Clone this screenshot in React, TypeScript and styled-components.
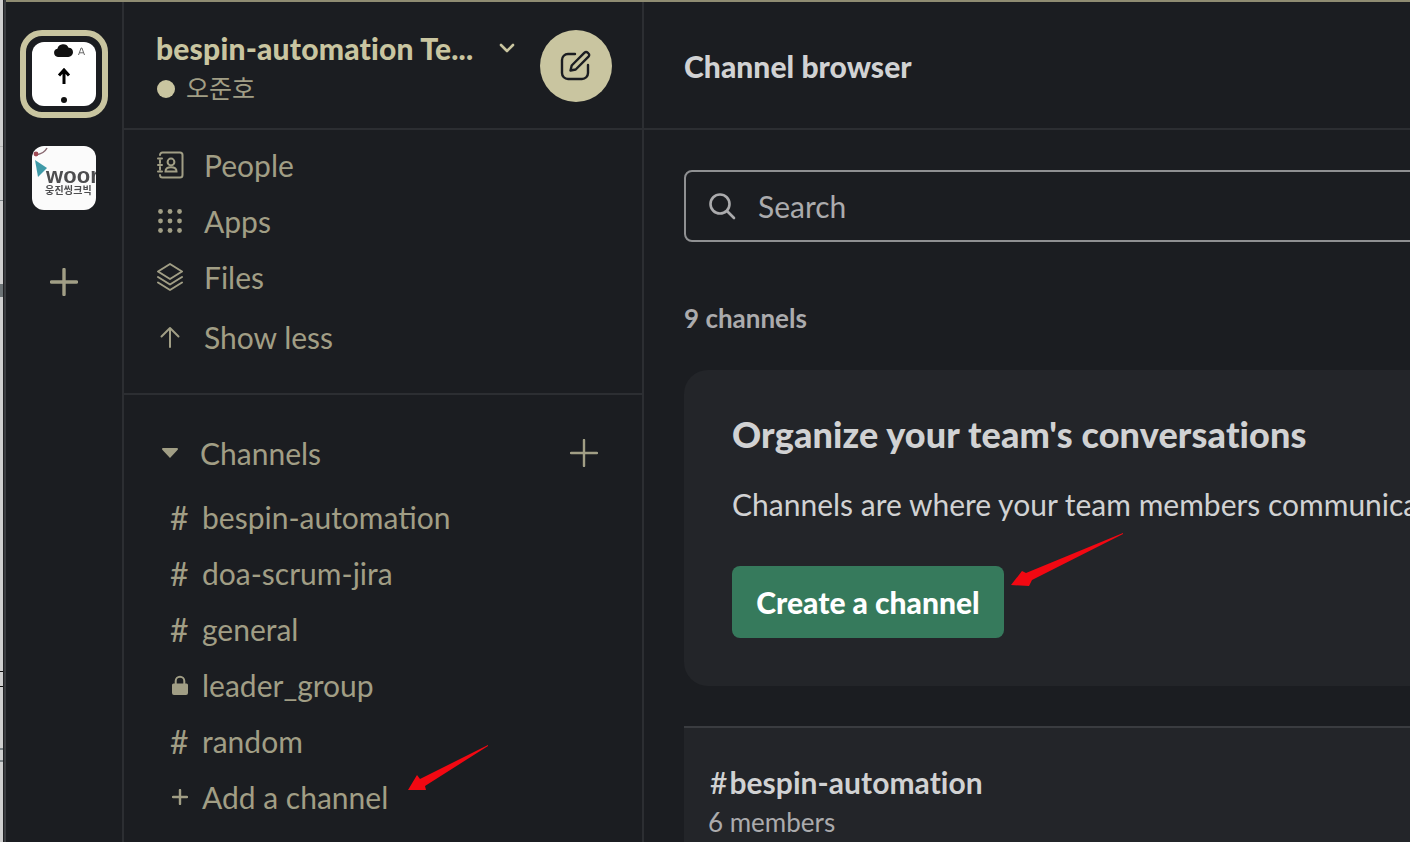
import React from "react";
import styled, { createGlobalStyle } from "styled-components";

const Global = createGlobalStyle`
  html, body { margin: 0; padding: 0; background: #1b1d21; overflow: hidden; }
  * { box-sizing: border-box; }
`;

const Page = styled.div`
  position: relative; width: 1410px; height: 842px; overflow: hidden;
  display: flex; background: #1b1d21;
  font-family: Lato, "Noto Sans CJK KR", sans-serif;
`;
const LeftEdge = styled.div`
  flex: none; width: 6px; border-right: 2px solid #3a3c40; box-shadow: inset -1px 0 0 #1f2023;
  background:
    linear-gradient(#b5b5b5, #b5b5b5) 0 146px / 4px 1px no-repeat,
    linear-gradient(#7d8588, #7d8588) 0 200px / 3px 1px no-repeat,
    linear-gradient(#6c7376, #6c7376) 0 284px / 3px 13px no-repeat,
    linear-gradient(#111, #111) 0 671px / 4px 1px no-repeat,
    linear-gradient(#111, #111) 0 686px / 4px 1px no-repeat,
    linear-gradient(#7d8588, #7d8588) 0 748px / 3px 2px no-repeat,
    linear-gradient(#7d8588, #7d8588) 0 760px / 3px 2px no-repeat,
    #cfcfcf;
`;
const Frame = styled.div`flex: 1; min-width: 0; display: flex; flex-direction: column;`;
const TopEdge = styled.div`height: 2px; background: #8f8c72; flex: none;`;
const Body = styled.div`flex: 1; display: flex; min-height: 0;`;
const Rail = styled.nav`
  flex: none; width: 118px; border-right: 2px solid #2c2e32;
  display: flex; flex-direction: column; align-items: center;
  padding: 28px 0 0 0;
`;
const ActiveRing = styled.div`
  width: 88px; height: 88px; border: 6px solid #c9c5a0; border-radius: 22px;
  display: flex; align-items: center; justify-content: center;
`;
const AvatarTile = styled.div`
  width: 64px; height: 64px; border-radius: 12px; background: #fff;
  position: relative; overflow: hidden; flex: none;
`;
const WoorTile = styled(AvatarTile)`
  margin-top: 28px; background: #fbfbfb; color: #4d4d4f;
  display: flex; flex-direction: column; padding: 22px 0 0 14px; filter: blur(.5px);
`;
const WoorWord = styled.span`
  font: 700 22px/16px "Liberation Sans", sans-serif; letter-spacing: .1px; white-space: nowrap;
`;
const WoorKorean = styled.span`
  font: 700 10px/12px "Noto Sans CJK KR", sans-serif; white-space: nowrap; letter-spacing: .2px; margin-left: -1px;
`;
const Swoosh = styled.svg`position: absolute; left: 0; top: 0;`;
const RailPlus = styled.svg`margin-top: 58px; color: #a19e85;`;

const Sidebar = styled.aside`
  flex: none; width: 520px; border-right: 2px solid #2c2e32;
  display: flex; flex-direction: column;
`;
const WorkspaceHeader = styled.header`
  height: 128px; flex: none; border-bottom: 2px solid #2c2e32;
  padding: 26px 30px 0 32px; display: flex; justify-content: space-between;
`;
const ComposeSlot = styled.div`padding-top: 2px; flex: none;`;
const WorkspaceInfo = styled.div`display: flex; flex-direction: column; padding-top: 2px;`;
const WorkspaceNameRow = styled.div`display: flex; align-items: flex-start; gap: 26px;`;
const WorkspaceName = styled.span`
  font-size: 30px; line-height: 36px; font-weight: 900; color: #c9c5a0; white-space: nowrap; letter-spacing: .2px;
`;
const Chevron = styled.svg`margin-top: 12px; color: #c9c5a0;`;
const UserRow = styled.div`display: flex; align-items: center; gap: 11px; margin-top: 6px;`;
const StatusDot = styled.span`width: 18px; height: 18px; border-radius: 50%; background: #c9c5a0; display: block; margin: 3px 0 0 1px;`;
const UserName = styled.span`
  font: 400 25px/30px "Noto Sans CJK KR", sans-serif; color: #a19e85;
`;
const ComposeButton = styled.button`
  width: 72px; height: 72px; border: 0; border-radius: 50%; background: #c9c5a0; padding: 0; margin: 0;
  display: flex; align-items: center; justify-content: center; color: #1b1d21; flex: none;
`;
const NavSection = styled.section`
  height: 265px; flex: none; border-bottom: 2px solid #2c2e32; padding: 7px 32px 0;
`;
const NavRow = styled.div<{ $gap?: number }>`
  height: 56px; display: flex; align-items: center; gap: 19px; color: #a19e85;
  font-size: 30px; margin-top: ${(p) => p.$gap ?? 0}px;
  svg { flex: none; margin-left: 1px; }
`;
const ChannelSection = styled.section`padding: 30px 0 0 38px; flex: 1;`;
const ChannelHeader = styled.div`
  height: 56px; display: flex; align-items: center; color: #a19e85; font-size: 30px; padding-right: 44px;
`;
const Caret = styled.svg`flex: none; margin-right: 22px;`;
const HeaderPlus = styled.svg`margin-left: auto;`;
const ChannelList = styled.div`margin-top: 8px;`;
const ChannelRow = styled.div`
  height: 56px; display: flex; align-items: center; color: #a19e85; font-size: 30px; padding-left: 8px;
`;
const ChannelGlyph = styled.span<{ $icon?: boolean }>`
  width: 32px; flex: none; display: flex; align-items: center; font-size: 32px;
  padding-left: ${(p) => (p.$icon ? 2 : 0)}px;
`;
const Main = styled.main`flex: 1; min-width: 0; display: flex; flex-direction: column;`;
const MainHeader = styled.header`
  height: 128px; flex: none; border-bottom: 2px solid #2c2e32; padding: 2px 0 0 40px;
  display: flex; align-items: center; font-size: 30px; font-weight: 900; color: #d1d2d3; letter-spacing: .05px;
`;
const MainBody = styled.div`padding: 40px 0 0 40px; width: 1200px;`;
const SearchBox = styled.div`
  height: 72px; border: 2px solid #8f9092; border-radius: 8px; display: flex; align-items: center;
  padding-left: 22px; gap: 22px; color: #ababad; font-size: 30px;
`;
const CountLabel = styled.div`
  margin-top: 58px; height: 36px; line-height: 36px; font-size: 26px; font-weight: 700; color: #ababad;
`;
const PromoCard = styled.section`
  margin-top: 34px; height: 316px; background: #232529; border-radius: 24px; padding: 42px 48px 0;
`;
const PromoTitle = styled.h2`
  margin: 0; font-size: 36px; line-height: 44px; font-weight: 900; color: #d1d2d3; white-space: nowrap; letter-spacing: .13px;
`;
const PromoText = styled.p`
  margin: 30px 0 0; font-size: 30px; line-height: 36px; color: #d1d2d3; white-space: nowrap;
`;
const CreateButton = styled.button`
  margin-top: 44px; width: 272px; height: 72px; border: 0; border-radius: 8px; background: #367a5c;
  color: #fff; font: 900 30px Lato, sans-serif; padding: 0; display: block;
`;
const ChannelCard = styled.article`
  margin-top: 40px; height: 200px; border-top: 2px solid #3a3c40; background: #232529; padding: 35px 26px 0;
`;
const ChannelCardTitle = styled.div`
  font-size: 30px; line-height: 38px; font-weight: 700; color: #d1d2d3; white-space: nowrap; letter-spacing: .05px;
`;
const ChannelCardHash = styled.span`font-weight: 500; margin-right: 2px;`;
const ChannelCardMeta = styled.div`font-size: 26px; line-height: 32px; color: #ababad; margin: 5px 0 0 -2px;`;
const Arrow = styled.svg`position: absolute; overflow: visible;`;

const RedArrow = ({ left, top, w, h, points }: { left: number; top: number; w: number; h: number; points: string }) => (
  <Arrow style={{ left, top }} width={w} height={h} viewBox={`0 0 ${w} ${h}`}>
    <polygon points={points} fill="#f20812" />
  </Arrow>
);

const channels = [
  { glyph: "#", name: "bespin-automation" },
  { glyph: "#", name: "doa-scrum-jira" },
  { glyph: "#", name: "general" },
  { glyph: "lock", name: "leader_group" },
  { glyph: "#", name: "random" },
  { glyph: "+", name: "Add a channel" },
];

const LockIcon = () => (
  <svg width="16" height="20" viewBox="0 0 16 20" fill="#a19e85">
    <path d="M1.5 8.5h13A1.5 1.5 0 0 1 16 10v8a2 2 0 0 1-2 2H2a2 2 0 0 1-2-2v-8a1.5 1.5 0 0 1 1.5-1.5Z" />
    <path d="M3.7 9V6a4.3 4.3 0 0 1 8.6 0v3" fill="none" stroke="#a19e85" strokeWidth="2" />
  </svg>
);
const SmallPlus = () => (
  <svg width="16" height="16" viewBox="0 0 16 16" stroke="#a19e85" strokeWidth="2.4" strokeLinecap="round">
    <path d="M8 1v14M1 8h14" />
  </svg>
);

export default function App() {
  return (
    <Page>
      <Global />
      <LeftEdge />
      <Frame>
        <TopEdge />
        <Body>
          <Rail>
            <ActiveRing>
              <AvatarTile>
                <svg width="64" height="64" viewBox="0 0 64 64">
                  <path d="M26 15a4.2 4.2 0 0 1-.6-8.3 6 6 0 0 1 11.2-1 4.6 4.6 0 0 1 4.4 4.6 4.7 4.7 0 0 1-4.7 4.7Z" fill="#111" />
                  <path d="M46.5 13l2.6-7h.8l2.6 7M47.6 10.8h3.8" fill="none" stroke="#666" strokeWidth="1" />
                  <path d="M32 42V29M27 33.5L32 28l5 5.5" fill="none" stroke="#000" strokeWidth="3" />
                  <circle cx="32" cy="58" r="3" fill="#111" />
                </svg>
              </AvatarTile>
            </ActiveRing>
            <WoorTile>
              <Swoosh width="24" height="34" viewBox="0 0 24 34">
                <path d="M15 2C13 6 9 8 4 9" fill="none" stroke="#8a6a72" strokeWidth="1.5" />
                <path d="M3 14l12 8-9 9Z" fill="#3f9aa8" />
                <circle cx="4" cy="8" r="2.4" fill="#a04a55" />
              </Swoosh>
              <WoorWord>woor</WoorWord>
              <WoorKorean>웅진씽크빅</WoorKorean>
            </WoorTile>
            <RailPlus width="28" height="28" viewBox="0 0 28 28" fill="none" stroke="currentColor" strokeWidth="3.4" strokeLinecap="round">
              <path d="M14 1.5v25M1.5 14h25" />
            </RailPlus>
          </Rail>
          <Sidebar>
            <WorkspaceHeader>
              <WorkspaceInfo>
                <WorkspaceNameRow>
                  <WorkspaceName>bespin-automation Te...</WorkspaceName>
                  <Chevron width="16" height="12" viewBox="0 0 16 12" fill="none" stroke="currentColor" strokeWidth="2.6" strokeLinecap="round" strokeLinejoin="round">
                    <path d="M2 3l6 6 6-6" />
                  </Chevron>
                </WorkspaceNameRow>
                <UserRow>
                  <StatusDot />
                  <UserName>오준호</UserName>
                </UserRow>
              </WorkspaceInfo>
              <ComposeSlot>
                <ComposeButton aria-label="New message">
                  <svg width="32" height="32" viewBox="0 0 32 32" fill="none" stroke="currentColor" strokeWidth="2.4" strokeLinecap="round" strokeLinejoin="round">
                    <path d="M15 4H8a6 6 0 0 0-6 6v13a6 6 0 0 0 6 6h14a6 6 0 0 0 6-6v-8" />
                    <path d="M10.5 20.5l1.2-5L24.5 2.7a2.2 2.2 0 0 1 3.2 0l.8.8a2.2 2.2 0 0 1 0 3.2L15.7 19.5Z" />
                  </svg>
                </ComposeButton>
              </ComposeSlot>
            </WorkspaceHeader>
            <NavSection>
              <NavRow>
                <svg width="28" height="28" viewBox="0 0 28 28" fill="none" stroke="#a19e85" strokeWidth="2" strokeLinecap="round">
                  <path d="M3 4a2.5 2.5 0 0 1 2.500-2.500H23A2.500 2.500 0 0 1 25.500 4v20a2.500 2.500 0 0 1-2.500 2.500H5.500A2.500 2.500 0 0 1 3 24" />
                  <path d="M1 7.500h4M1 14h4M1 20.500h4M3 9.500v2.500M3 16v2.500" />
                  <circle cx="14" cy="11" r="3.400" />
                  <path d="M8.500 20.500c0-3.300 2.300-4.300 5.500-4.300s5.500 1 5.500 4.300Z" />
                </svg>
                People
              </NavRow>
              <NavRow>
                <svg width="28" height="28" viewBox="0 0 28 28" fill="#a19e85">
                  {[4.5, 14, 23.5].flatMap((y) => [3.5, 13, 22.5].map((x) => <circle key={`${x}-${y}`} cx={x} cy={y} r="2.4" />))}
                </svg>
                Apps
              </NavRow>
              <NavRow>
                <svg width="28" height="30" viewBox="0 0 28 30" fill="none" stroke="#a19e85" strokeWidth="2" strokeLinejoin="round" strokeLinecap="round">
                  <path d="M13 2l12 7.5L13 17 1 9.5Z" />
                  <path d="M1 15l12 7.5L25 15" />
                  <path d="M1 20.5L13 28l12-7.5" />
                </svg>
                Files
              </NavRow>
              <NavRow $gap={4}>
                <svg width="28" height="28" viewBox="0 0 28 28" fill="none" stroke="#a19e85" strokeWidth="2" strokeLinecap="round" strokeLinejoin="round">
                  <path d="M13 24V5M4.500 13.500L13 5l8.500 8.500" />
                </svg>
                Show less
              </NavRow>
            </NavSection>
            <ChannelSection>
              <ChannelHeader>
                <Caret width="16" height="10" viewBox="0 0 16 10" fill="#a19e85">
                  <path d="M1 0h14a1 1 0 0 1 .7 1.7L8 10 .3 1.7A1 1 0 0 1 1 0Z" />
                </Caret>
                Channels
                <HeaderPlus width="28" height="28" viewBox="0 0 28 28" fill="none" stroke="#a19e85" strokeWidth="2.4" strokeLinecap="round">
                  <path d="M14 1v26M1 14h26" />
                </HeaderPlus>
              </ChannelHeader>
              <ChannelList>
                {channels.map((c) => (
                  <ChannelRow key={c.name}>
                    <ChannelGlyph $icon={c.glyph !== "#"}>
                      {c.glyph === "lock" ? <LockIcon /> : c.glyph === "+" ? <SmallPlus /> : c.glyph}
                    </ChannelGlyph>
                    {c.name}
                  </ChannelRow>
                ))}
              </ChannelList>
            </ChannelSection>
          </Sidebar>
          <Main>
            <MainHeader>Channel browser</MainHeader>
            <MainBody>
              <SearchBox>
                <svg width="28" height="28" viewBox="0 0 28 28" fill="none" stroke="#ababad" strokeWidth="2.6" strokeLinecap="round">
                  <circle cx="12" cy="12" r="9.5" />
                  <path d="M19 19l7 7" />
                </svg>
                Search
              </SearchBox>
              <CountLabel>9 channels</CountLabel>
              <PromoCard>
                <PromoTitle>Organize your team's conversations</PromoTitle>
                <PromoText>Channels are where your team members communicate. They're best when organized around a topic.</PromoText>
                <CreateButton>Create a channel</CreateButton>
              </PromoCard>
              <ChannelCard>
                <ChannelCardTitle><ChannelCardHash>#</ChannelCardHash>bespin-automation</ChannelCardTitle>
                <ChannelCardMeta>6 members</ChannelCardMeta>
              </ChannelCard>
            </MainBody>
          </Main>
        </Body>
      </Frame>
      <RedArrow left={408} top={745} w={80} h={46} points="0,45 9,30 12,34 80,0 80,1 17,41 18,45" />
      <RedArrow left={1011} top={533} w={112} h={54} points="0,52 11,38 15,40 112,0 112,1 21,47 18,53" />
    </Page>
  );
}
